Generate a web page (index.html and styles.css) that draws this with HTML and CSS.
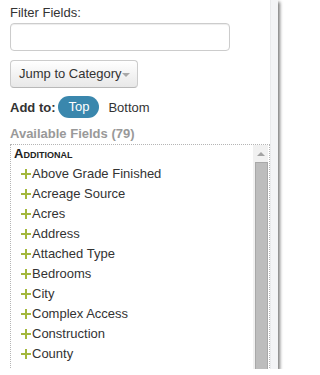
FILE: index.html
```html
<!DOCTYPE html>
<html>
<head>
<meta charset="utf-8">
<link rel="stylesheet" href="styles.css">
</head>
<body>
<div class="panel">
  <div class="main">
    <div class="label">Filter Fields:</div>
    <div class="input"></div>
    <div class="btn">Jump to Category<span class="caret"></span></div>
    <div class="addto">
      <span class="addlabel">Add to:</span>
      <span class="pill">Top</span>
      <span class="opt">Bottom</span>
    </div>
    <div class="avail">Available Fields (79)</div>
    <div class="list">
      <div class="items">
        <div class="cat">Additional</div>
        <div class="item"><svg class="plus" viewBox="0 0 10 10" width="10" height="10"><rect x="0" y="4" width="10" height="2"/><rect x="4" y="0" width="2" height="10"/></svg>Above Grade Finished</div>
        <div class="item"><svg class="plus" viewBox="0 0 10 10" width="10" height="10"><rect x="0" y="4" width="10" height="2"/><rect x="4" y="0" width="2" height="10"/></svg>Acreage Source</div>
        <div class="item"><svg class="plus" viewBox="0 0 10 10" width="10" height="10"><rect x="0" y="4" width="10" height="2"/><rect x="4" y="0" width="2" height="10"/></svg>Acres</div>
        <div class="item"><svg class="plus" viewBox="0 0 10 10" width="10" height="10"><rect x="0" y="4" width="10" height="2"/><rect x="4" y="0" width="2" height="10"/></svg>Address</div>
        <div class="item"><svg class="plus" viewBox="0 0 10 10" width="10" height="10"><rect x="0" y="4" width="10" height="2"/><rect x="4" y="0" width="2" height="10"/></svg>Attached Type</div>
        <div class="item"><svg class="plus" viewBox="0 0 10 10" width="10" height="10"><rect x="0" y="4" width="10" height="2"/><rect x="4" y="0" width="2" height="10"/></svg>Bedrooms</div>
        <div class="item"><svg class="plus" viewBox="0 0 10 10" width="10" height="10"><rect x="0" y="4" width="10" height="2"/><rect x="4" y="0" width="2" height="10"/></svg>City</div>
        <div class="item"><svg class="plus" viewBox="0 0 10 10" width="10" height="10"><rect x="0" y="4" width="10" height="2"/><rect x="4" y="0" width="2" height="10"/></svg>Complex Access</div>
        <div class="item"><svg class="plus" viewBox="0 0 10 10" width="10" height="10"><rect x="0" y="4" width="10" height="2"/><rect x="4" y="0" width="2" height="10"/></svg>Construction</div>
        <div class="item"><svg class="plus" viewBox="0 0 10 10" width="10" height="10"><rect x="0" y="4" width="10" height="2"/><rect x="4" y="0" width="2" height="10"/></svg>County</div>
        <div class="item"><svg class="plus" viewBox="0 0 10 10" width="10" height="10"><rect x="0" y="4" width="10" height="2"/><rect x="4" y="0" width="2" height="10"/></svg></div>
      </div>
      <div class="sbar">
        <div class="sarrow"><span class="tri"></span></div>
        <div class="thumb"></div>
      </div>
    </div>
  </div>
  <div class="strip"></div>
</div>
</body>
</html>
```

FILE: styles.css
```css
html, body {
  margin: 0;
  padding: 0;
  background: #fff;
}
body {
  font-family: "Liberation Sans", Arial, sans-serif;
  font-size: 13px;
  color: #333;
}
.panel {
  width: 278px;
  height: 369px;
  display: flex;
  overflow: hidden;
  background: #fff;
  box-shadow: 2px 2px 3px rgba(0, 0, 0, 0.5);
}
.main {
  width: 260px;
  padding-left: 10px;
  display: flex;
  flex-direction: column;
  flex: none;
}
.main > * {
  flex: none;
}
.strip {
  width: 7px;
  flex: none;
  background: #f3f4f6;
  border-left: 1px solid #e9eaec;
}
.label {
  margin-top: 5px;
  line-height: 16px;
}
.input {
  margin-top: 2px;
  width: 220px;
  height: 28px;
  box-sizing: border-box;
  border: 1px solid #ccc;
  border-radius: 4px;
  box-shadow: inset 0 1px 1px rgba(0, 0, 0, 0.075);
}
.btn {
  margin-top: 9px;
  width: 128px;
  height: 28px;
  box-sizing: border-box;
  border: 1px solid #ccc;
  border-bottom-color: #b8b8b8;
  border-radius: 4px;
  background: linear-gradient(#ffffff, #e8e8e8);
  padding-left: 8px;
  display: flex;
  align-items: center;
  line-height: 16px;
}
.caret {
  width: 0;
  height: 0;
  border-left: 4px solid transparent;
  border-right: 4px solid transparent;
  border-top: 4px solid #a8a8a8;
  margin-left: 0;
  margin-top: 1px;
}
.addto {
  margin-top: 8px;
  height: 22px;
  display: flex;
  align-items: center;
}
.addlabel {
  font-weight: bold;
}
.pill {
  margin-left: 3px;
  height: 22px;
  line-height: 22px;
  padding: 0 10px;
  border-radius: 11px;
  background: #3a87ad;
  color: #fff;
}
.opt {
  margin-left: 9px;
}
.avail {
  margin-top: 8px;
  line-height: 16px;
  font-weight: bold;
  color: #999;
}
.list {
  margin-top: 2px;
  width: 260px;
  height: 260px;
  box-sizing: border-box;
  border: 1px dotted #b5b5b5;
  display: flex;
}
.items {
  flex: 1;
  padding-left: 3px;
}
.cat {
  height: 19px;
  line-height: 18px;
  font-size: 13px;
  font-weight: bold;
  font-variant: small-caps;
  color: #222;
}
.item {
  height: 20px;
  line-height: 20px;
  padding-left: 7px;
  display: flex;
  align-items: center;
}
.plus {
  fill: #a3b83c;
  margin-right: 1px;
  flex: none;
}
.sbar {
  width: 15px;
  margin-right: 1px;
  background: #f1f1f1;
  display: flex;
  flex-direction: column;
}
.sarrow {
  height: 17px;
  flex: none;
  display: flex;
  align-items: center;
  justify-content: center;
}
.tri {
  width: 0;
  height: 0;
  border-left: 4px solid transparent;
  border-right: 4px solid transparent;
  border-bottom: 4px solid #a3a3a3;
  margin-top: 1px;
}
.thumb {
  margin-left: 2px;
  width: 13px;
  flex: 1;
  box-sizing: border-box;
  background: #bdbdbd;
  border: 1px solid #a8a8a8;
}
```
